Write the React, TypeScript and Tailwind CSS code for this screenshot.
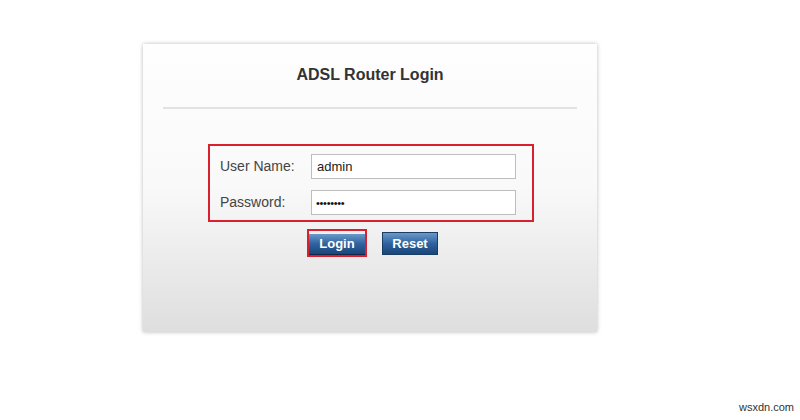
import React from 'react';

const font = { fontFamily: '"Liberation Sans", Arial, sans-serif' };

const RouterLogin: React.FC = () => {
  return (
    <div className="relative w-[800px] h-[420px] bg-white" style={font}>
      <div className="pt-[44px] pl-[143px]">
        {/* Login card */}
        <div className="w-[454px] h-[288px] flex flex-col items-center bg-linear-to-b from-[#fefefe] via-[#f9f9f9] via-50% to-[#dedede] shadow-[0_0_4px_rgba(0,0,0,0.28)]">
          <h1 className="pt-[21px] text-[16px] leading-[20px] font-bold text-[#333]">
            ADSL Router Login
          </h1>
          <div className="mt-[22px] w-[414px] h-[2px] bg-[#e2e2e2]" />

          {/* Credentials */}
          <div className="mt-[35px] ml-[2px] w-[326px] h-[78px] border-2 border-[#d9202f] flex flex-col pt-[8px] pl-[10px] pr-[16px] gap-[11px]">
            <div className="flex items-center justify-between">
              <label className="text-[14px] text-[#444]">User Name:</label>
              <input
                readOnly
                value="admin"
                className="w-[205px] h-[25px] px-[5px] text-[13px] text-[#222] bg-white border border-[#bdbdbd] outline-none"
              />
            </div>
            <div className="flex items-center justify-between">
              <label className="text-[14px] text-[#444]">Password:</label>
              <input
                readOnly
                value="••••••••"
                className="w-[205px] h-[25px] px-[4px] text-[11px] tracking-[-0.3px] text-[#111] bg-white border border-[#bdbdbd] outline-none"
              />
            </div>
          </div>

          {/* Buttons */}
          <div className="mt-[7px] ml-[5px] flex items-center gap-[15px]">
            <div className="border-2 border-[#d9202f]">
              <button className="w-[56px] h-[21px] bg-linear-to-b from-[#6a99c9] via-[#2e62a0] to-[#1b4677] border-b border-[#10284a] text-white text-[13px] font-bold leading-none">
                Login
              </button>
            </div>
            <button className="w-[56px] h-[23px] bg-linear-to-b from-[#6a99c9] via-[#2e62a0] to-[#1b4677] border border-[#1a3d66] text-white text-[13px] font-bold leading-none">
              Reset
            </button>
          </div>
        </div>
      </div>

      <span className="absolute left-[739px] top-[399px] text-[11px] text-[#333]">wsxdn.com</span>
    </div>
  );
};

export default function App() {
  return <RouterLogin />;
}
